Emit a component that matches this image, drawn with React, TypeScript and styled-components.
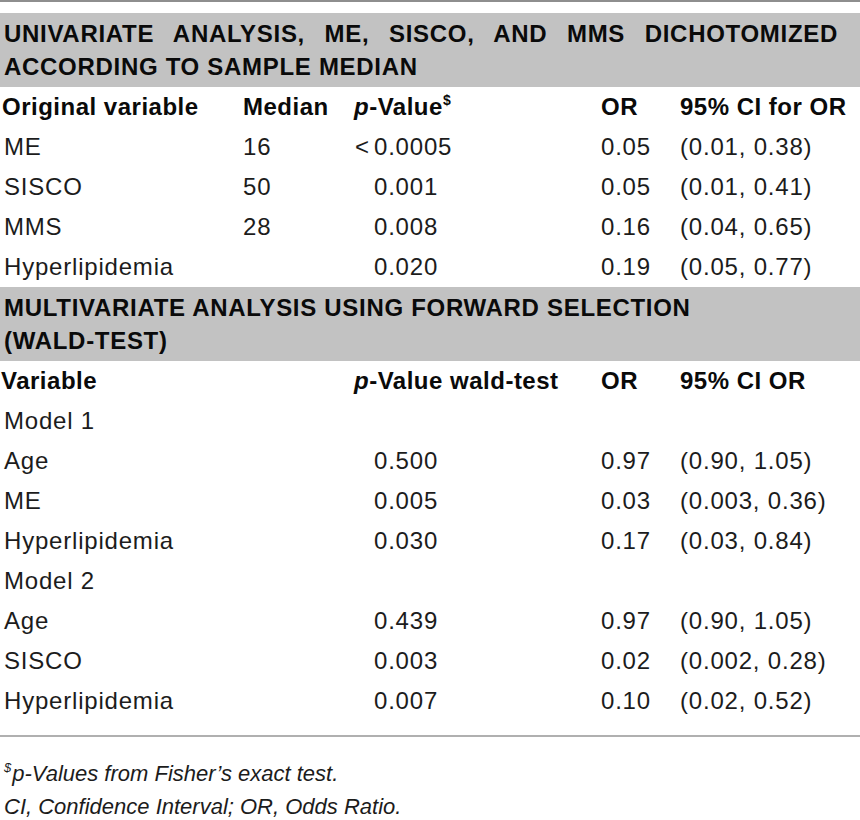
import React from 'react';
import styled, { createGlobalStyle } from 'styled-components';

const Global = createGlobalStyle`
  html, body { margin:0; padding:0; background:#fff; }
  body { font-family:"Liberation Sans", Arial, sans-serif; color:#111; }
`;

const Page = styled.div`width:860px;border-top:2px solid #8e8e8e;padding-top:11px;`;

const Band = styled.div`
  background:#c2c2c2;padding:4px 22px 4px 4px;
  font-weight:700;font-size:24px;line-height:33px;letter-spacing:0.7px;color:#0a0a0a;
`;
const BandLine = styled.span<{ $justify?: boolean }>`
  display:block;white-space:nowrap;
  text-align:${p => (p.$justify ? 'justify' : 'left')};
  text-align-last:${p => (p.$justify ? 'justify' : 'left')};
`;

const Row = styled.div<{ $head?: boolean }>`
  display:grid;grid-template-columns:239px 111px 247px 79px 1fr;
  height:40px;align-items:center;padding-left:4px;
  font-size:24px;letter-spacing:${p => (p.$head ? '0.5px' : '0.8px')};
  font-weight:${p => (p.$head ? 700 : 400)};color:${p => (p.$head ? '#0a0a0a' : '#1c1c1c')};
  white-space:nowrap;
`;
const Cell = styled.div<{ $indent?: number; $shift?: number }>`
  padding-left:${p => p.$indent ?? 0}px;
  margin-left:${p => p.$shift ?? 0}px;
`;
const Wide = styled(Cell)`grid-column:span 2;`;
const P = styled.i`font-style:italic;`;
const Sup = styled.sup`font-size:14px;vertical-align:10px;line-height:0;letter-spacing:0;`;
const Lt = styled.span`display:inline-block;width:19px;margin-left:-19px;text-align:left;`;

const Foot = styled.div`
  margin-top:14px;border-top:2px solid #b0b0b0;padding:20px 0 0 4px;
  font-style:italic;font-size:22px;line-height:33px;color:#1c1c1c;
`;
const FootSup = styled.sup`font-size:13px;vertical-align:9px;line-height:0;margin-right:1px;`;

type R = [string, string, string, string, string];

const uni: R[] = [
  ['ME', '16', '<0.0005', '0.05', '(0.01, 0.38)'],
  ['SISCO', '50', '0.001', '0.05', '(0.01, 0.41)'],
  ['MMS', '28', '0.008', '0.16', '(0.04, 0.65)'],
  ['Hyperlipidemia', '', '0.020', '0.19', '(0.05, 0.77)'],
];

const multi: R[] = [
  ['Model 1', '', '', '', ''],
  ['Age', '', '0.500', '0.97', '(0.90, 1.05)'],
  ['ME', '', '0.005', '0.03', '(0.003, 0.36)'],
  ['Hyperlipidemia', '', '0.030', '0.17', '(0.03, 0.84)'],
  ['Model 2', '', '', '', ''],
  ['Age', '', '0.439', '0.97', '(0.90, 1.05)'],
  ['SISCO', '', '0.003', '0.02', '(0.002, 0.28)'],
  ['Hyperlipidemia', '', '0.007', '0.10', '(0.02, 0.52)'],
];

function PVal({ v }: { v: string }) {
  if (v.startsWith('<')) return <Cell $indent={20}><Lt>&lt;</Lt>{v.slice(1)}</Cell>;
  return <Cell $indent={20}>{v}</Cell>;
}

function DataRow({ r }: { r: R }) {
  return (
    <Row>
      <Cell>{r[0]}</Cell>
      <Cell>{r[1]}</Cell>
      <PVal v={r[2]} />
      <Cell>{r[3]}</Cell>
      <Cell>{r[4]}</Cell>
    </Row>
  );
}

export default function App() {
  return (
    <Page>
      <Global />
      <Band>
        <BandLine $justify>UNIVARIATE ANALYSIS, ME, SISCO, AND MMS DICHOTOMIZED</BandLine>
        <BandLine>ACCORDING TO SAMPLE MEDIAN</BandLine>
      </Band>
      <Row $head>
        <Cell $shift={-2}>Original variable</Cell>
        <Cell>Median</Cell>
        <Cell><P>p</P>-Value<Sup>$</Sup></Cell>
        <Cell>OR</Cell>
        <Cell>95% CI for OR</Cell>
      </Row>
      {uni.map((r, i) => <DataRow key={i} r={r} />)}

      <Band>
        <BandLine>MULTIVARIATE ANALYSIS USING FORWARD SELECTION</BandLine>
        <BandLine>(WALD-TEST)</BandLine>
      </Band>
      <Row $head>
        <Wide $shift={-3}>Variable</Wide>
        <Cell><P>p</P>-Value wald-test</Cell>
        <Cell>OR</Cell>
        <Cell>95% CI OR</Cell>
      </Row>
      {multi.map((r, i) => <DataRow key={i} r={r} />)}

      <Foot>
        <div><FootSup>$</FootSup>p-Values from Fisher’s exact test.</div>
        <div>CI, Confidence Interval; OR, Odds Ratio.</div>
      </Foot>
    </Page>
  );
}
